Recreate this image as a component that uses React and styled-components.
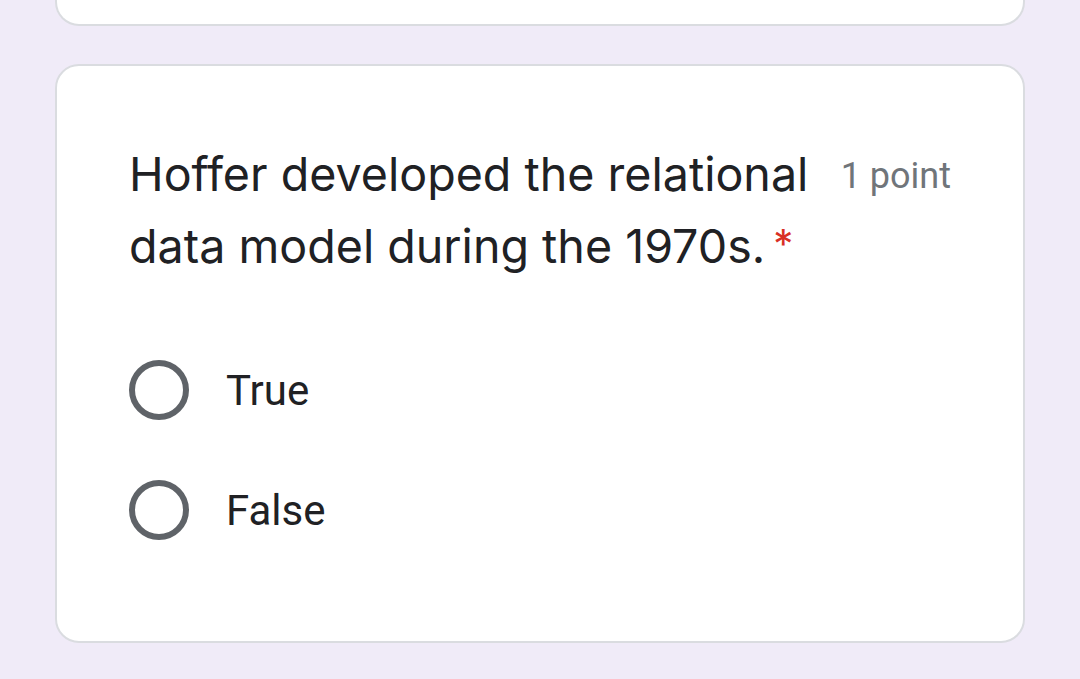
import React from "react";
import styled, { createGlobalStyle } from "styled-components";

const Global = createGlobalStyle`
  html, body { margin: 0; padding: 0; background: #f0ebf8; }
  body { width: 1080px; height: 679px; overflow: hidden; }
`;

const Page = styled.div`
  width: 1080px;
  height: 679px;
  background: #f0ebf8;
  padding: 0 55px;
  box-sizing: border-box;
  display: flex;
  flex-direction: column;
  gap: 38px;
`;

const Card = styled.div`
  background: #fff;
  border: 2px solid #dadce0;
  border-radius: 24px;
  box-sizing: border-box;
`;

const TopCard = styled(Card)`
  height: 26px;
  border-top: none;
  border-top-left-radius: 0;
  border-top-right-radius: 0;
`;

const QuestionCard = styled(Card)`
  padding: 72px 72px 70px 72px;
  height: 579px;
  display: flex;
  flex-direction: column;
`;

const Header = styled.div`
  display: flex;
  align-items: flex-start;
  gap: 22px;
  margin-bottom: 48px;
`;

const Title = styled.div`
  flex: 1;
  font-family: "Inter", "Open Sans", sans-serif;
  font-size: 46.6px;
  line-height: 72px;
  color: #202124;
`;

const Required = styled.span`
  color: #d93025;
  margin-left: 8px;
  font-size: 40px;
  vertical-align: top;
  position: relative;
  top: -2px;
`;

const Points = styled.div`
  font-family: "Roboto", sans-serif;
  font-size: 36px;
  line-height: 72px;
  color: #70757a;
  white-space: nowrap;
  margin-top: 2px;
`;

const Option = styled.label`
  display: flex;
  align-items: center;
  height: 120px;
  gap: 37px;
  font-family: "Roboto", sans-serif;
  font-size: 42px;
  color: #202124;
`;

const Radio = styled.span`
  width: 60px;
  height: 60px;
  border: 6px solid #5f6368;
  border-radius: 50%;
  box-sizing: border-box;
  flex: none;
`;

export default function App() {
  return (
    <>
      <Global />
      <Page>
        <TopCard />
        <QuestionCard>
          <Header>
            <Title>
              Hoffer developed the relational data model during the 1970s.
              <Required>*</Required>
            </Title>
            <Points>1 point</Points>
          </Header>
          {["True", "False"].map((o) => (
            <Option key={o}>
              <Radio />
              {o}
            </Option>
          ))}
        </QuestionCard>
      </Page>
    </>
  );
}
